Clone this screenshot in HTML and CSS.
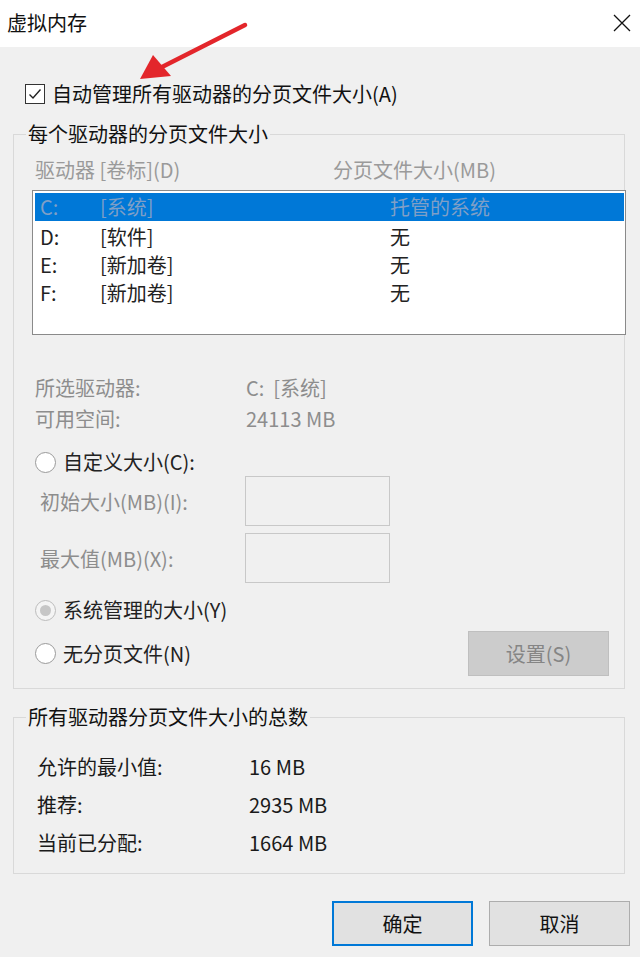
FILE: index.html
```html
<!DOCTYPE html>
<html lang="zh-CN">
<head>
<meta charset="utf-8">
<title>虚拟内存</title>
<link rel="stylesheet" href="styles.css">
</head>
<body>
<div class="window">
  <div class="titlebar">
    <span class="title">虚拟内存</span>
    <svg class="close" width="18" height="18" viewBox="0 0 18 18"><path d="M1 1L17 17M17 1L1 17" stroke="#111" stroke-width="1.3" fill="none"/></svg>
  </div>
  <div class="content">
    <div class="auto">
      <span class="checkbox"><svg width="16" height="16" viewBox="0 0 16 16"><path d="M2.5 8.5L6 12L13.5 3.5" stroke="#222" stroke-width="1.4" fill="none"/></svg></span>
      <span>自动管理所有驱动器的分页文件大小(A)</span>
    </div>

    <fieldset class="group g1">
      <legend>每个驱动器的分页文件大小</legend>
      <div class="headers">
        <span>驱动器 [卷标](D)</span>
        <span>分页文件大小(MB)</span>
      </div>
      <div class="listbox">
        <div class="row selected"><span>C:</span><span>[系统]</span><span>托管的系统</span></div>
        <div class="row"><span>D:</span><span>[软件]</span><span>无</span></div>
        <div class="row"><span>E:</span><span>[新加卷]</span><span>无</span></div>
        <div class="row"><span>F:</span><span>[新加卷]</span><span>无</span></div>
      </div>
      <div class="info">
        <span>所选驱动器:</span><span>C:&nbsp; [系统]</span>
        <span>可用空间:</span><span>24113 MB</span>
      </div>
      <div class="radio custom"><span class="dot"></span><span>自定义大小(C):</span></div>
      <div class="sizes">
        <span class="lbl">初始大小(MB)(I):</span><span class="input"></span>
        <span class="lbl">最大值(MB)(X):</span><span class="input"></span>
      </div>
      <div class="radio managed"><span class="dot on"></span><span>系统管理的大小(Y)</span></div>
      <div class="lastrow">
        <div class="radio"><span class="dot"></span><span>无分页文件(N)</span></div>
        <span class="btn disabled">设置(S)</span>
      </div>
    </fieldset>

    <fieldset class="group g2">
      <legend>所有驱动器分页文件大小的总数</legend>
      <div class="totals">
        <span>允许的最小值:</span><span>16 MB</span>
        <span>推荐:</span><span>2935 MB</span>
        <span>当前已分配:</span><span>1664 MB</span>
      </div>
    </fieldset>

    <div class="buttons">
      <span class="btn primary">确定</span>
      <span class="btn">取消</span>
    </div>
  </div>

  <svg class="arrow" width="640" height="100" viewBox="0 0 640 100">
    <path d="M245 25L162 67" stroke="#e3262b" stroke-width="4.5" stroke-linecap="round" fill="none"/>
    <path d="M140 79L153 55L171 76Z" fill="#e3262b"/>
  </svg>
</div>
</body>
</html>
```
FILE: styles.css
```css
* { box-sizing: border-box; }
html, body { margin: 0; padding: 0; }
body {
  width: 640px;
  height: 957px;
  background: #f0f0f0;
  font-family: "Noto Sans CJK SC", "Noto Sans", sans-serif;
  font-size: 20px;
  color: #1a1a1a;
  overflow: hidden;
}
.window { position: relative; width: 640px; height: 957px; }
.titlebar {
  height: 47px;
  background: #fff;
  display: flex;
  align-items: center;
  justify-content: space-between;
  padding: 0 9px 2px 7px;
}
.title { font-size: 20px; line-height: 24px; color: #111; }
.close { display: block; }

.content { padding: 37px 15px 0 13px; }

.auto {
  display: flex;
  align-items: center;
  gap: 7px;
  height: 20px;
  padding-left: 12px;
  line-height: 20px;
  color: #111;
}
.checkbox {
  width: 20px; height: 20px;
  border: 1.6px solid #333;
  background: #fff;
  display: flex; align-items: center; justify-content: center;
}
.checkbox svg { display: block; }

.group {
  margin: 0;
  padding: 0 0 0 18px;
  min-width: 0;
  border: 1px solid #d9d9d9;
}
.group legend {
  margin-left: -6px;
  padding: 0 2px;
  font-size: 20px;
  line-height: 24px;
  color: #111;
}
.g1 { margin-top: 18px; padding-bottom: 12px; padding-right: 15px; }

.headers {
  margin-top: 12px;
  height: 24px;
  line-height: 24px;
  display: grid;
  grid-template-columns: 298px 1fr;
  padding-left: 3px;
  color: #9a9a9a;
}
.listbox {
  margin-top: 8px;
  margin-right: -17px;
  height: 145px;
  background: #fff;
  border: 1px solid #8a8a8a;
  padding: 2px 1px 0 2px;
}
.row {
  display: grid;
  grid-template-columns: 60px 290px 1fr;
  padding-left: 5px;
  height: 28px;
  line-height: 28px;
  color: #222;
}
.row.selected {
  background: #0078d7;
  color: #7f9fc6;
  margin-bottom: 2px;
}
.info {
  margin-top: 37px;
  display: grid;
  grid-template-columns: 211px 1fr;
  padding-left: 3px;
  line-height: 31px;
  color: #8d8d8d;
}
.radio {
  display: flex;
  align-items: center;
  gap: 7px;
  height: 28px;
  line-height: 28px;
  padding-left: 3px;
  color: #222;
}
.dot {
  width: 21px; height: 21px;
  border-radius: 50%;
  border: 1px solid #9a9a9a;
  background: #fff;
  display: flex; align-items: center; justify-content: center;
}
.dot.on { border-color: #bcbcbc; background: #f4f4f4; }
.dot.on::after {
  content: "";
  width: 11px; height: 11px;
  border-radius: 50%;
  background: #c6c6c6;
}
.custom { margin-top: 14px; }
.sizes {
  display: grid;
  grid-template-columns: 213px 145px;
  row-gap: 7px;
  align-items: center;
  color: #8d8d8d;
}
.sizes .lbl { padding-left: 8px; }
.input {
  height: 50px;
  border: 1px solid #c8c8c8;
  background: #f0f0f0;
}
.managed { margin-top: 13px; }
.lastrow {
  margin-top: 7px;
  display: flex;
  align-items: center;
  justify-content: space-between;
}
.btn {
  width: 141px;
  height: 45px;
  display: flex;
  align-items: center;
  justify-content: center;
  background: #e1e1e1;
  border: 1px solid #adadad;
  font-size: 20px;
  color: #111;
}
.btn.disabled {
  background: #cccccc;
  border-color: #bfbfbf;
  color: #858585;
}
.g2 { margin-top: 16px; padding-bottom: 11px; }
.totals {
  padding-top: 19px;
  display: grid;
  grid-template-columns: 212px 1fr;
  padding-left: 5px;
  line-height: 38px;
  color: #1a1a1a;
}
.buttons {
  margin-top: 27px;
  margin-right: -5px;
  display: flex;
  justify-content: flex-end;
  gap: 16px;
}
.btn.primary { border: 2px solid #0078d7; }

.arrow {
  position: absolute;
  left: 0;
  top: 0;
  pointer-events: none;
}
```
